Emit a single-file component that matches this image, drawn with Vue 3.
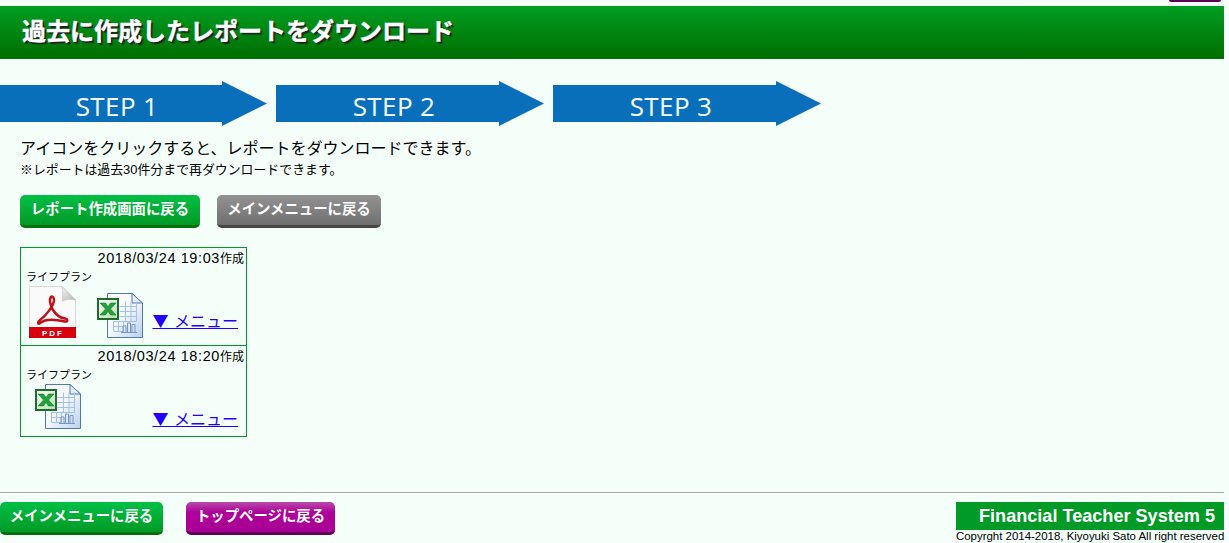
<script setup>
const steps = ['STEP 1', 'STEP 2', 'STEP 3']

const reports = [
  { id: 'r1', date: '2018/03/24 19:03', pdf: true },
  { id: 'r2', date: '2018/03/24 18:20', pdf: false }
]
</script>

<template>
  <div class="page">
    <div class="top-strip"><span class="top-sliver"></span></div>
    <h1 class="title">過去に作成したレポートをダウンロード</h1>

    <div class="steps">
      <div v-for="s in steps" :key="s" class="step">{{ s }}</div>
    </div>

    <p class="lead">アイコンをクリックすると、レポートをダウンロードできます。</p>
    <p class="note">※レポートは過去30件分まで再ダウンロードできます。</p>

    <div class="actions">
      <a class="btn green wide">レポート作成画面に戻る</a>
      <a class="btn gray">メインメニューに戻る</a>
    </div>

    <div class="reports">
      <div v-for="r in reports" :key="r.id" class="report">
        <div class="date">{{ r.date }}<span class="made">作成</span></div>
        <div class="kind">ライフプラン</div>
        <div class="files">
          <svg v-if="r.pdf" class="pdf" width="47" height="52" viewBox="0 0 47 52">
            <defs>
              <linearGradient id="fold" x1="0" y1="0" x2="1" y2="1">
                <stop offset="0" stop-color="#f4f4f4" />
                <stop offset="1" stop-color="#b4b4b4" />
              </linearGradient>
            </defs>
            <path d="M0.5 0.5H33L46.5 14V52H0.5Z" fill="#fafafa" stroke="#d8d8d8" />
            <path d="M33 0.5C34 6 34 12 33 15C38 13 43 13 46.5 14Z" fill="url(#fold)" stroke="#bbb" stroke-width="0.6" />
            <rect y="41" width="47" height="11" fill="#d8000f" />
            <text x="24" y="49.500" text-anchor="middle" class="pdf-label">PDF</text>
            <path
              d="M11 37C9 39 8 36 11 34C17 30 24 20 25 15C25.500 11 23 10 22 11C20 13 21 19 24 24C27 29 32 32 36 32.500C39 33 39 36 36 35.500C28 34 18 32 11 37Z"
              fill="none"
              stroke="#c0101a"
              stroke-width="2.500"
              stroke-linejoin="round"
            />
          </svg>
          <svg class="xls" :class="{ solo: !r.pdf }" width="46" height="45" viewBox="0 0 46 45">
            <defs>
              <linearGradient :id="'page-' + r.id" x1="0" y1="0" x2="1" y2="1">
                <stop offset="0" stop-color="#ffffff" />
                <stop offset="0.5" stop-color="#f2f7fd" />
                <stop offset="1" stop-color="#b9d0ee" />
              </linearGradient>
              <linearGradient :id="'box-' + r.id" x1="0" y1="0" x2="1" y2="1">
                <stop offset="0" stop-color="#ffffff" />
                <stop offset="1" stop-color="#b5dcae" />
              </linearGradient>
            </defs>
            <path
              d="M10.500 0.500H35L45.500 10V44.500H10.500Z"
              :fill="'url(#page-' + r.id + ')'"
              stroke="#4f79ad"
            />
            <path d="M35 0.500V10H45.500Z" fill="#e6eef9" stroke="#4f79ad" />
            <path
              d="M22.500 13.500H39.500M22.500 18.500H39.500M22.500 23.500H39.500M16.500 28.500H39.500M16.500 33.500H26.500M16.500 38.500H26.500M28.500 8.500V28.500M34 8.500V28.500M39.500 8.500V28.500M16.500 28.500V38.500M21.500 28.500V38.500M26.500 28.500V38.500"
              fill="none"
              stroke="#a4c0e6"
            />
            <path d="M26 39V33H29V39M30.500 39V30H33.500V39M35 39V31.500H38V39M24 39.500H40" fill="none" stroke="#7497c6" />
            <rect x="1" y="6" width="20" height="20" :fill="'url(#box-' + r.id + ')'" stroke="#1f6b2b" stroke-width="2" />
            <path d="M3 10H8.500L11 13.500L13.500 10H19L13.500 16L19 22H13.500L11 18.500L8.500 22H3L8.500 16Z" fill="#22a33a" stroke="#0e6a20" stroke-width="0.5" />
          </svg>
          <a class="menu" :class="{ lifted: r.pdf }">▼ メニュー</a>
        </div>
      </div>
    </div>

    <footer class="footer">
      <div class="foot-btns">
        <a class="btn green foot-main">メインメニューに戻る</a>
        <a class="btn purple">トップページに戻る</a>
      </div>
      <div class="brand">
        <div class="brand-name">Financial Teacher System 5</div>
        <div class="copy">Copyrght 2014-2018, Kiyoyuki Sato All right reserved</div>
      </div>
    </footer>
  </div>
</template>

<style>
html,
body {
  margin: 0;
  overflow: hidden;
  background: #f5fffa;
}
</style>

<style scoped>
.page {
  box-sizing: border-box;
  width: 1224px;
  height: 543px;
  display: flex;
  flex-direction: column;
  background: #f5fffa;
  color: #000;
  font-family: "Liberation Sans", "Noto Sans CJK JP", sans-serif;
}

.top-strip {
  height: 6px;
  display: flex;
  justify-content: flex-end;
  padding-right: 3px;
}
.top-sliver {
  width: 52px;
  height: 2px;
  background: #5e0058;
  border-radius: 0 0 4px 4px;
}

.title {
  margin: 0;
  height: 53px;
  padding-left: 22px;
  background: linear-gradient(#009d22, #006e00);
  color: #fff;
  font-size: 24px;
  font-weight: 700;
  line-height: 51px;
  -webkit-text-stroke: 0.4px #fff;
  text-shadow: 2px 2px 1px #222;
}

.steps {
  display: flex;
  gap: 9px;
  margin: 22px 0 0 -1px;
}
.step {
  width: 268px;
  height: 45px;
  box-sizing: border-box;
  padding-right: 32px;
  background: #0a6fbb;
  clip-path: polygon(0 4px, 223px 4px, 223px 0, 100% 50%, 223px 100%, 223px 41px, 0 41px);
  color: #f5fffa;
  font-family: "Open Sans", sans-serif;
  font-size: 26px;
  letter-spacing: 0.4px;
  line-height: 51px;
  text-align: center;
}

.lead {
  margin: 12px 0 0 20px;
  font-size: 16px;
  line-height: 22px;
}
.note {
  margin: 0 0 0 20px;
  font-size: 12.900px;
  line-height: 20px;
}

.actions {
  display: flex;
  gap: 17px;
  margin: 15px 0 0 20px;
}
.btn {
  box-sizing: border-box;
  display: block;
  height: 33px;
  border-radius: 5px;
  color: #fff;
  font-size: 14.400px;
  font-weight: 700;
  line-height: 29px;
  text-align: center;
}
.green {
  width: 180px;
  background: linear-gradient(#00c046, #009a26);
  border-bottom: 3px solid #006f0c;
}
.gray {
  width: 164px;
  background: linear-gradient(#929292, #707070);
  border-bottom: 3px solid #444;
}
.purple {
  width: 149px;
  background: linear-gradient(#b84aa8 0, #ae009a 35%, #a80094);
  border-bottom: 3px solid #5e0058;
}

.reports {
  width: 227px;
  box-sizing: border-box;
  margin: 19px 0 0 20px;
  border: 1px solid #009a26;
}
.report {
  height: 97px;
  box-sizing: border-box;
  padding-top: 1px;
}
.report + .report {
  height: 91px;
  border-top: 1px solid #009a26;
}
.date {
  font-size: 14.500px;
  letter-spacing: 0.6px;
  line-height: 18px;
  padding-right: 2px;
  text-align: right;
}
.made {
  font-size: 12px;
  letter-spacing: 0;
}
.kind {
  margin-left: 5px;
  font-size: 11px;
  line-height: 19px;
}
.files {
  display: flex;
  align-items: flex-end;
  height: 51px;
  padding-left: 8px;
}
.report + .report .files {
  height: 44px;
}
.xls {
  display: block;
  margin-left: 21px;
}
.xls.solo {
  margin-left: 6px;
}
.pdf {
  display: block;
}
.pdf-label {
  fill: #fff;
  font-size: 8px;
  font-weight: 700;
  letter-spacing: 2px;
}
.menu {
  margin: 0 8px 0 auto;
  color: #2200ff;
  font-family: "Noto Sans CJK JP", sans-serif;
  font-size: 16px;
  line-height: 21px;
  word-spacing: 2px;
  text-decoration: underline;
}
.menu.lifted {
  margin-bottom: 7px;
}

.footer {
  margin-top: auto;
  height: 51px;
  box-sizing: border-box;
  border-top: 1px solid #a8a8a8;
  padding-top: 9px;
  display: flex;
  justify-content: space-between;
}
.foot-btns {
  display: flex;
  gap: 23px;
}
.foot-main {
  width: 163px;
}
.brand {
  width: 268px;
}
.brand-name {
  height: 28px;
  padding-right: 9px;
  background: #009a26;
  color: #fff;
  font-size: 18.100px;
  font-weight: 700;
  line-height: 29px;
  text-align: right;
}
.copy {
  font-size: 11.450px;
  line-height: 13px;
  text-align: right;
  white-space: nowrap;
}
</style>
